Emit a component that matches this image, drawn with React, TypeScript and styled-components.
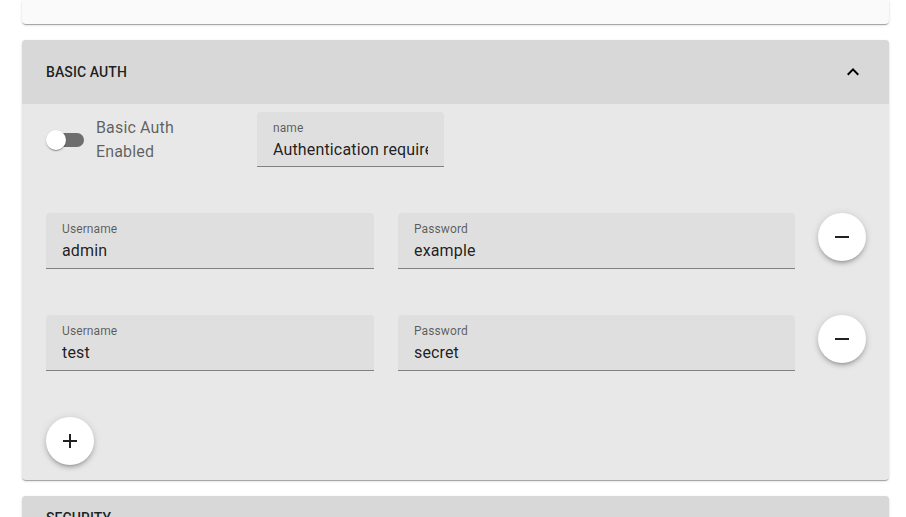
import React from "react";
import styled, { createGlobalStyle } from "styled-components";

const Global = createGlobalStyle`
  html, body { margin: 0; padding: 0; background: #ffffff; }
  body { font-family: Roboto, "Liberation Sans", Arial, sans-serif; overflow: hidden; }
  * { box-sizing: border-box; }
`;

const Page = styled.div`
  width: 906px;
  height: 517px;
  padding: 0 17px 0 22px;
  display: flex;
  flex-direction: column;
  gap: 16px;
  overflow: hidden;
`;

const cardShadow = `0px 2px 1px -1px rgba(0,0,0,0.2), 0px 1px 1px 0px rgba(0,0,0,0.14), 0px 1px 3px 0px rgba(0,0,0,0.12)`;

const TopCard = styled.div`
  height: 24px;
  flex: none;
  background: #fafafa;
  border-radius: 0 0 4px 4px;
  box-shadow: ${cardShadow};
`;

const Card = styled.section`
  flex: none;
  border-radius: 4px;
  background: #e8e8e8;
  box-shadow: ${cardShadow};
  overflow: hidden;
`;

const Header = styled.div<{ $h: number }>`
  height: ${(p) => p.$h}px;
  background: #d8d8d8;
  display: flex;
  align-items: center;
  justify-content: space-between;
  padding: 0 24px;
`;

const Title = styled.span`
  font-size: 14px;
  font-weight: 500;
  color: rgba(0, 0, 0, 0.87);
  letter-spacing: 0.1px;
`;

const Body = styled.div`
  display: flex;
  flex-direction: column;
  gap: 46px;
  padding: 8px 23px 15px 24px;
`;

const ToggleRow = styled.div`
  height: 55px;
  display: flex;
  align-items: flex-start;
`;

const ToggleGroup = styled.label`
  width: 211px;
  height: 55px;
  display: flex;
  align-items: center;
`;

const Switch = styled.span`
  position: relative;
  width: 50px;
  height: 20px;
  flex: none;
`;

const Track = styled.span`
  position: absolute;
  left: 2px;
  top: 3px;
  width: 36px;
  height: 14px;
  border-radius: 7px;
  background: #6e6e6e;
`;

const Thumb = styled.span`
  position: absolute;
  left: 0;
  top: 0;
  width: 20px;
  height: 20px;
  border-radius: 50%;
  background: #ffffff;
  box-shadow: 0px 2px 1px -1px rgba(0,0,0,0.2), 0px 1px 1px 0px rgba(0,0,0,0.14), 0px 1px 3px 0px rgba(0,0,0,0.12);
`;

const ToggleLabel = styled.span`
  font-size: 16px;
  line-height: 24px;
  color: rgba(0, 0, 0, 0.6);
  letter-spacing: 0.15px;
  white-space: pre-line;
`;

const Field = styled.div<{ $w: number; $h?: number }>`
  width: ${(p) => p.$w}px;
  height: ${(p) => p.$h ?? 56}px;
  flex: none;
  background: #dfdfdf;
  border-radius: 4px 4px 0 0;
  border-bottom: 1px solid rgba(0, 0, 0, 0.42);
  padding: 9px 16px 0 16px;
  overflow: hidden;
`;

const FieldLabel = styled.div`
  font-size: 12px;
  line-height: 14px;
  color: rgba(0, 0, 0, 0.6);
  letter-spacing: 0.1px;
`;

const FieldValue = styled.div`
  margin-top: 3px;
  font-size: 16px;
  line-height: 23px;
  color: rgba(0, 0, 0, 0.87);
  letter-spacing: 0.15px;
  white-space: nowrap;
  overflow: hidden;
`;

const CredRow = styled.div`
  display: flex;
  align-items: flex-start;
  gap: 24px;
`;

const Fab = styled.button`
  width: 48px;
  height: 48px;
  flex: none;
  border: none;
  border-radius: 50%;
  background: #ffffff;
  display: flex;
  align-items: center;
  justify-content: center;
  padding: 0;
  color: rgba(0, 0, 0, 0.87);
  box-shadow: 0px 3px 3px -2px rgba(0,0,0,0.2), 0px 3px 4px 0px rgba(0,0,0,0.14), 0px 1px 8px 0px rgba(0,0,0,0.12);
`;

const RemoveFab = styled(Fab)`
  margin-left: -1px;
`;

const Icon = ({ d }: { d: string }) => (
  <svg width="24" height="24" viewBox="0 0 24 24" fill="currentColor">
    <path d={d} />
  </svg>
);

const creds = [
  { user: "admin", pass: "example" },
  { user: "test", pass: "secret" },
];

export default function App() {
  return (
    <>
      <Global />
      <Page>
        <TopCard />
        <Card>
          <Header $h={64}>
            <Title>BASIC AUTH</Title>
            <Icon d="M12 8l-6 6 1.41 1.41L12 10.83l4.59 4.58L18 14z" />
          </Header>
          <Body>
            <ToggleRow>
              <ToggleGroup>
                <Switch>
                  <Track />
                  <Thumb />
                </Switch>
                <ToggleLabel>{"Basic Auth\nEnabled"}</ToggleLabel>
              </ToggleGroup>
              <Field $w={187} $h={55}>
                <FieldLabel>name</FieldLabel>
                <FieldValue>Authentication required</FieldValue>
              </Field>
            </ToggleRow>
            {creds.map((c) => (
              <CredRow key={c.user}>
                <Field $w={328}>
                  <FieldLabel>Username</FieldLabel>
                  <FieldValue>{c.user}</FieldValue>
                </Field>
                <Field $w={397}>
                  <FieldLabel>Password</FieldLabel>
                  <FieldValue>{c.pass}</FieldValue>
                </Field>
                <RemoveFab>
                  <Icon d="M19 13H5v-2h14v2z" />
                </RemoveFab>
              </CredRow>
            ))}
            <Fab>
              <Icon d="M19 13h-6v6h-2v-6H5v-2h6V5h2v6h6v2z" />
            </Fab>
          </Body>
        </Card>
        <Card>
          <Header $h={44}>
            <Title>SECURITY</Title>
          </Header>
        </Card>
      </Page>
    </>
  );
}
